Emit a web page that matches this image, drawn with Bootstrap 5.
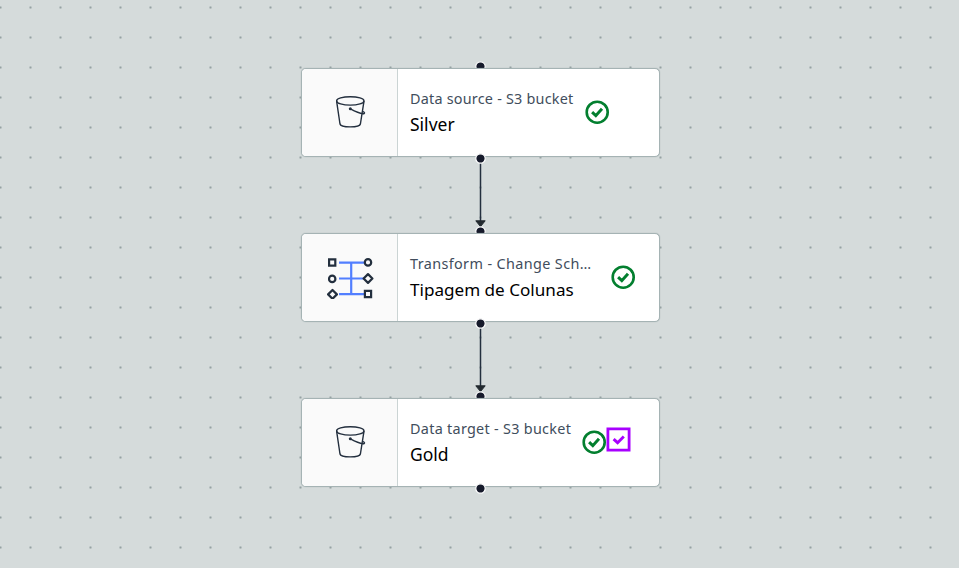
<!DOCTYPE html>
<html lang="pt">
<head>
<meta charset="utf-8">
<meta name="viewport" content="width=device-width, initial-scale=1">
<title>Job graph</title>
<link href="https://cdn.jsdelivr.net/npm/bootstrap@5.3.0/dist/css/bootstrap.min.css" rel="stylesheet">
<style>
body{font-family:"Noto Sans","Open Sans",sans-serif;background:#d5dbdb}
.flow{width:959px;height:568px;background:#d5dbdb radial-gradient(circle at 15.5px 15.5px,#95a2a3 0,#a9b4b5 .8px,rgba(213,219,219,0) 1.7px) -15px -8px/30px 30px}
.node{left:301px;width:359px;height:89px}
.n1{top:68px}.n2{top:233px}.n3{top:398px}
.node-box{border:1px solid #a5b3b4;border-radius:5px;background:#fff;box-shadow:0 0 1px 0 #95a5a6}
.node-icon{width:96px;background:#fafafa;border-right:1px solid #cbd4d4}
.node-icon svg{position:relative;left:1px;top:-1px}
.kind{font-size:14.4px;line-height:20px;color:#414d5c;white-space:nowrap}
.label{font-size:17.1px;line-height:24px;color:#000;margin-top:4px;white-space:nowrap}
.n1 .label,.n3 .label{font-size:17.5px;margin-top:3px}
.texts{padding:20px 0 0 12px}
.k1{width:164px;letter-spacing:.22px}
.k2{width:182px;letter-spacing:.38px}
.k3{width:161px;letter-spacing:.29px}
.state{margin-top:31.3px;margin-left:11.3px}
.s2{margin-left:18.8px}
.state-square{margin-top:28px}
.port{left:174px;width:11px;height:11px}
.port svg{display:block}
.port-in{top:-7px}
.port-out{top:85px;z-index:2}
.edge{left:472px;width:16px;height:70px}
.e1{top:159px}.e2{top:324px}
</style>
</head>
<body>
<svg class="d-none" aria-hidden="true">
<symbol id="bucket" viewBox="0 0 34 36"><g fill="none" stroke="#232f3e" stroke-width="1.4" stroke-linejoin="round"><ellipse cx="16.3" cy="6.9" rx="13.7" ry="4.2"/><path d="M2.6 7.2 6 30c.4 2 4.7 2.9 10.2 2.9s9.8-.9 10.2-2.9L30 7.2M16.3 14.9c4.3 2.2 9.2 4.4 12.5 4.8 2.5.2 2.1-1.5-.1-2.3"/></g><circle cx="16.3" cy="14.8" r="1.5" fill="#232f3e"/></symbol>
<symbol id="ok" viewBox="0 0 24 24"><circle cx="12.2" cy="12.2" r="10.5" fill="none" stroke="#037f2f" stroke-width="2.6"/><path d="m7.1 12.2 3.7 3.5 6.2-7" fill="none" stroke="#037f2f" stroke-width="3"/></symbol>
<symbol id="port" viewBox="0 0 11 11"><circle cx="5.5" cy="5.5" r="4.7" fill="#161a2b" stroke="#fff" stroke-width="1.2"/></symbol>
</svg>
<main class="flow position-relative overflow-hidden">
  <svg class="edge e1 position-absolute" viewBox="0 0 16 70"><path d="M8.5 0v64" stroke="#232f3e" stroke-width="1.5"/><path d="M3.8 61.8h9.4L8.5 67.6z" fill="#232a30" stroke="#232a30" stroke-linejoin="round"/></svg>
  <svg class="edge e2 position-absolute" viewBox="0 0 16 70"><path d="M8.5 0v64" stroke="#232f3e" stroke-width="1.5"/><path d="M3.8 61.8h9.4L8.5 67.6z" fill="#232a30" stroke="#232a30" stroke-linejoin="round"/></svg>

  <section class="node n1 position-absolute">
    <span class="port port-in position-absolute"><svg width="11" height="11"><use href="#port"/></svg></span>
    <div class="node-box position-relative d-flex h-100 overflow-hidden">
      <div class="node-icon d-flex align-items-center justify-content-center flex-shrink-0"><svg width="34" height="36"><use href="#bucket"/></svg></div>
      <div class="texts"><div class="kind k1">Data source - S3 bucket</div><div class="label">Silver</div></div>
      <svg class="state flex-shrink-0" width="24" height="24"><use href="#ok"/></svg>
    </div>
    <span class="port port-out position-absolute"><svg width="11" height="11"><use href="#port"/></svg></span>
  </section>

  <section class="node n2 position-absolute">
    <span class="port port-in position-absolute"><svg width="11" height="11"><use href="#port"/></svg></span>
    <div class="node-box position-relative d-flex h-100 overflow-hidden">
      <div class="node-icon d-flex align-items-center justify-content-center flex-shrink-0">
        <svg width="48" height="44" viewBox="0 0 48 44" fill="none"><path d="M12 7.7h25M12 23.5h25M12 39.2h25M24.2 7.7v31.5" stroke="#527fff" stroke-width="2.2"/><g stroke="#232f3e" stroke-width="2.2" fill="#fafafa"><path d="M2.1 4.4h6.2v6.2H2.1zM37.9 35.9h6.2v6.2h-6.2z"/><circle cx="41" cy="7.4" r="3.2"/><circle cx="5.2" cy="23.9" r="3.2"/><path d="m41 19.1 4.4 4.4-4.4 4.4-4.4-4.4zM5.5 35l4.4 4.4-4.4 4.4-4.4-4.4z" stroke-linejoin="round"/></g></svg>
      </div>
      <div class="texts"><div class="kind k2">Transform - Change Sch…</div><div class="label">Tipagem de Colunas</div></div>
      <svg class="state s2 flex-shrink-0" width="24" height="24"><use href="#ok"/></svg>
    </div>
    <span class="port port-out position-absolute"><svg width="11" height="11"><use href="#port"/></svg></span>
  </section>

  <section class="node n3 position-absolute">
    <span class="port port-in position-absolute"><svg width="11" height="11"><use href="#port"/></svg></span>
    <div class="node-box position-relative d-flex h-100 overflow-hidden">
      <div class="node-icon d-flex align-items-center justify-content-center flex-shrink-0"><svg width="34" height="36"><use href="#bucket"/></svg></div>
      <div class="texts"><div class="kind k3">Data target - S3 bucket</div><div class="label">Gold</div></div>
      <svg class="state flex-shrink-0" width="24" height="24"><use href="#ok"/></svg>
      <svg class="state-square flex-shrink-0" width="25" height="25" viewBox="0 0 25 25" fill="none" stroke="#a800ff"><path d="M1.9 1.9h21.2v21.2H1.9z" stroke-width="2.8"/><path d="m7.6 12.1 4 3.6 6.2-6.2" stroke-width="2.9"/></svg>
    </div>
    <span class="port port-out position-absolute"><svg width="11" height="11"><use href="#port"/></svg></span>
  </section>
</main>
<script src="https://cdn.jsdelivr.net/npm/bootstrap@5.3.0/dist/js/bootstrap.bundle.min.js"></script>
</body>
</html>
